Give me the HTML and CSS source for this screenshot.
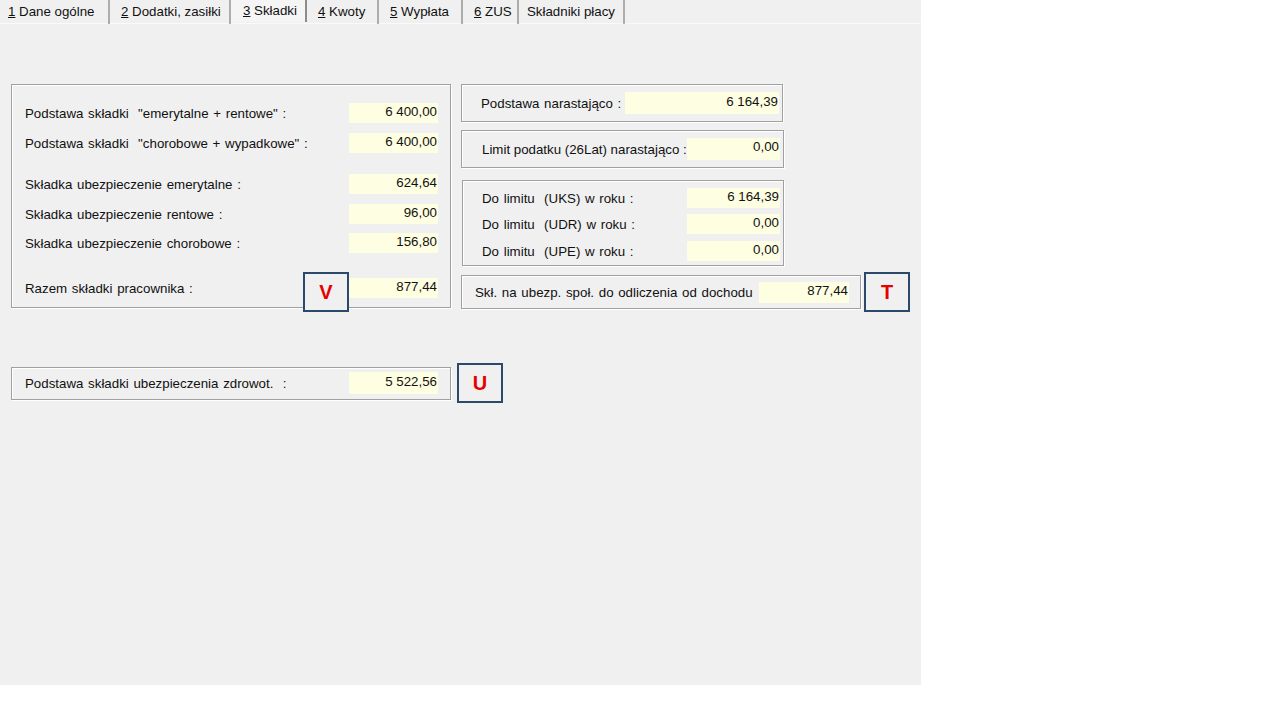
FILE: index.html
```html
<!DOCTYPE html>
<html>
<head>
  <meta charset="UTF-8">
  <title>Składki</title>
  <link rel="stylesheet" href="styles.css">
</head>
<body>

  <div class="panel">
    <div class="tabs">
      <div class="tab t1"><u>1</u> Dane ogólne</div>
      <div class="tab t2"><u>2</u> Dodatki, zasiłki</div>
      <div class="tab t3 active"><u>3</u> Składki</div>
      <div class="tab t4"><u>4</u> Kwoty</div>
      <div class="tab t5"><u>5</u> Wypłata</div>
      <div class="tab t6"><u>6</u> ZUS</div>
      <div class="tab t7">Składniki płacy</div>
    </div>

    <div class="content">
      <div class="top-row">
        <div class="group left-box">
          <div class="row r1">
            <span class="label">Podstawa składki  "emerytalne + rentowe" :</span>
            <span class="field">6 400,00</span>
          </div>
          <div class="row r2">
            <span class="label">Podstawa składki  "chorobowe + wypadkowe" :</span>
            <span class="field">6 400,00</span>
          </div>
          <div class="row r3">
            <span class="label">Składka ubezpieczenie emerytalne :</span>
            <span class="field">624,64</span>
          </div>
          <div class="row r4">
            <span class="label">Składka ubezpieczenie rentowe :</span>
            <span class="field">96,00</span>
          </div>
          <div class="row r5">
            <span class="label">Składka ubezpieczenie chorobowe :</span>
            <span class="field">156,80</span>
          </div>
          <div class="row r6">
            <span class="label">Razem składki pracownika :</span>
            <span class="field">877,44</span>
          </div>
          <div class="marker marker-v">V</div>
        </div>

        <div class="right-col">
          <div class="group box-sum">
            <span class="label">Podstawa narastająco :</span>
            <span class="field wide">6 164,39</span>
          </div>
          <div class="group box-limit">
            <span class="label">Limit podatku (26Lat) narastająco :</span>
            <span class="field">0,00</span>
          </div>
          <div class="group box-year">
            <div class="row y1">
              <span class="label">Do limitu  (UKS) w roku :</span>
              <span class="field">6 164,39</span>
            </div>
            <div class="row y2">
              <span class="label">Do limitu  (UDR) w roku :</span>
              <span class="field">0,00</span>
            </div>
            <div class="row y3">
              <span class="label">Do limitu  (UPE) w roku :</span>
              <span class="field">0,00</span>
            </div>
          </div>
          <div class="marked-row t-row">
            <div class="group box-deduct">
              <span class="label">Skł. na ubezp. społ. do odliczenia od dochodu</span>
              <span class="field">877,44</span>
            </div>
            <div class="marker">T</div>
          </div>
        </div>
      </div>

      <div class="marked-row u-row">
        <div class="group health-box">
          <span class="label">Podstawa składki ubezpieczenia zdrowot.  :</span>
          <span class="field">5 522,56</span>
        </div>
        <div class="marker">U</div>
      </div>
    </div>
  </div>

</body>
</html>
```

FILE: styles.css
```css
html, body {
  margin: 0;
  padding: 0;
  background: #fff;
  font-family: "Liberation Sans", Arial, sans-serif;
  font-size: 13.3px;
  color: #111;
}

.panel {
  width: 921px;
  height: 685px;
  background: #f0f0f0;
}

/* tab strip */
.tabs {
  display: flex;
  height: 24px;
  border-bottom: 1px solid #fafafa;
  box-sizing: border-box;
}
.tab {
  font-size: 13.3px;
  line-height: 24px;
  height: 24px;
  box-sizing: border-box;
  border-right: 2px solid #adadad;
  white-space: pre;
}
.tab u {
  text-decoration: underline;
}
.tab.active {
  background: #f5f5f5;
  height: 22px;
  line-height: 22px;
  border-right-color: #8c8c8c;
}
.t1 { width: 110px; padding-left: 8px; }
.t2 { width: 121px; padding-left: 11px; }
.t3 { width: 76px; padding-left: 12px; }
.t4 { width: 72px; padding-left: 11px; }
.t5 { width: 84px; padding-left: 11px; }
.t6 { width: 56px; padding-left: 11px; }
.t7 { width: 106px; padding-left: 8px; }

.content {
  padding: 60px 0 0 11px;
}

.top-row {
  display: flex;
  gap: 10px;
  align-items: flex-start;
}

/* etched group boxes */
.group {
  border: 1px solid #a0a0a0;
  box-shadow: inset 1px 1px 0 #fff, 1px 1px 0 #fff;
  box-sizing: border-box;
}

.label {
  white-space: pre;
  word-spacing: 1px;
}

.field {
  display: block;
  background: #fefee2;
  text-align: right;
  box-sizing: border-box;
  padding: 1px 1px 0 0;
  height: 20px;
  line-height: 16px;
}

.row {
  display: flex;
  justify-content: space-between;
  align-items: center;
  height: 20px;
}
.row .label {
  padding-top: 1px;
}

/* left box */
.left-box {
  position: relative;
  width: 440px;
  height: 224px;
  padding: 0 12px 0 13px;
}
.left-box .field {
  width: 89px;
}
.r1 { margin-top: 18px; }
.r2 { margin-top: 10px; }
.r3 { margin-top: 21px; }
.r4 { margin-top: 10px; }
.r5 { margin-top: 9px; }
.r6 { margin-top: 25px; }

/* right column */
.right-col {
  display: flex;
  flex-direction: column;
  align-items: flex-start;
}

.box-sum,
.box-limit,
.box-deduct,
.health-box {
  display: flex;
  align-items: center;
  justify-content: space-between;
}

.box-sum {
  width: 322px;
  height: 38px;
  padding: 0 3px 0 19px;
}
.box-sum .field {
  width: 154px;
  height: 22px;
  padding-top: 2px;
}

.box-limit {
  margin-top: 8px;
  width: 323px;
  height: 38px;
  padding: 0 3px 0 20px;
}
.box-limit .label {
  word-spacing: 0;
}
.box-limit .field {
  width: 93px;
  height: 22px;
}

.box-year {
  margin-top: 12px;
  margin-left: 1px;
  width: 322px;
  height: 86px;
  padding: 0 3px 0 19px;
}
.box-year .field {
  width: 93px;
}
.y1 { margin-top: 7px; }
.y2 { margin-top: 6px; }
.y3 { margin-top: 7px; }

.marked-row {
  display: flex;
  align-items: center;
}

.t-row {
  margin-top: 6px;
  gap: 3px;
}
.box-deduct {
  width: 400px;
  height: 34px;
  padding: 0 11px 0 13px;
}
.box-deduct .field {
  width: 90px;
  height: 21px;
}

.u-row {
  margin-top: 51px;
  gap: 6px;
}
.health-box {
  width: 440px;
  height: 33px;
  padding: 0 12px 0 13px;
}
.health-box .field {
  width: 89px;
  height: 22px;
  padding-top: 2px;
}

/* annotation markers */
.marker {
  width: 46px;
  height: 40px;
  box-sizing: border-box;
  border: 2px solid #2b4a6b;
  background: #f0f0f0;
  color: #e60000;
  font-weight: bold;
  font-size: 20px;
  line-height: 36px;
  text-align: center;
}
.marker-v {
  position: absolute;
  left: 291px;
  top: 187px;
}
```
